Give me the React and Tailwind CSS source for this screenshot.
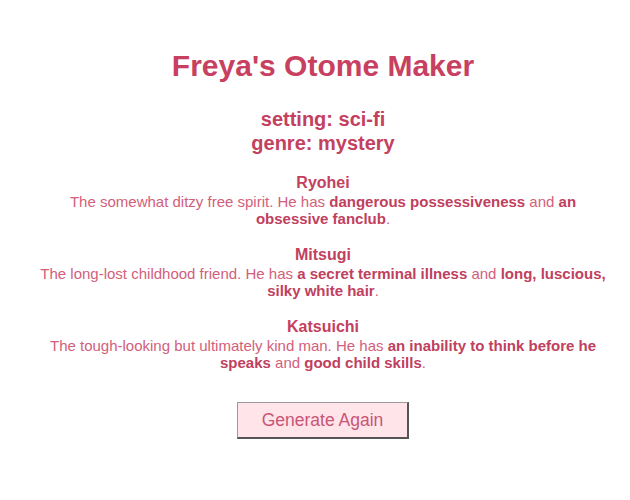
import React, { useState } from 'react';

const SETTINGS = ['sci-fi'];
const GENRES = ['mystery'];

const guys = [
  {
    name: 'Ryohei',
    intro: 'The somewhat ditzy free spirit.',
    traits: ['dangerous possessiveness', 'an obsessive fanclub'],
  },
  {
    name: 'Mitsugi',
    intro: 'The long-lost childhood friend.',
    traits: ['a secret terminal illness', 'long, luscious, silky white hair'],
  },
  {
    name: 'Katsuichi',
    intro: 'The tough-looking but ultimately kind man.',
    traits: ['an inability to think before he speaks', 'good child skills'],
  },
];

const Guy = ({ guy }) => (
  <div className="mt-[19px] first:mt-0">
    <h3 className="text-[16px] leading-[18.5px] font-bold text-[#c4405f]">{guy.name}</h3>
    <p className="text-[15px] leading-[17.3px] text-[#d2607b]">
      {guy.intro} He has <b className="text-[#c0405e]">{guy.traits[0]}</b> and{' '}
      <b className="text-[#c0405e]">{guy.traits[1]}</b>.
    </p>
  </div>
);

const App = () => {
  const [seed, setSeed] = useState(0);
  const setting = SETTINGS[seed % SETTINGS.length];
  const genre = GENRES[seed % GENRES.length];

  return (
    <div
      className="min-h-[500px] bg-white text-[#c8405f] text-center pt-[49px] pl-[36px] pr-[20px]"
      style={{ fontFamily: '"Liberation Sans", Arial, sans-serif' }}
    >
      <h1 className="text-[30px] leading-[34px] font-bold">Freya's Otome Maker</h1>

      <div className="mt-[24px] text-[20px] leading-[24px] font-bold text-[#c4405f]">
        <p>setting: {setting}</p>
        <p>genre: {genre}</p>
      </div>

      <div className="mt-[19px]">
        {guys.map((g) => (
          <Guy key={g.name} guy={g} />
        ))}
      </div>

      <button
        onClick={() => setSeed(seed + 1)}
        className="mt-[31px] w-[172px] h-[37px] bg-[#ffe4ea] text-[#c85676] text-[17.5px] border-t border-l border-r-2 border-b-2 border-t-[#9a9a9a] border-l-[#9a9a9a] border-r-[#555] border-b-[#555]"
      >
        Generate Again
      </button>
    </div>
  );
};

export default App;
